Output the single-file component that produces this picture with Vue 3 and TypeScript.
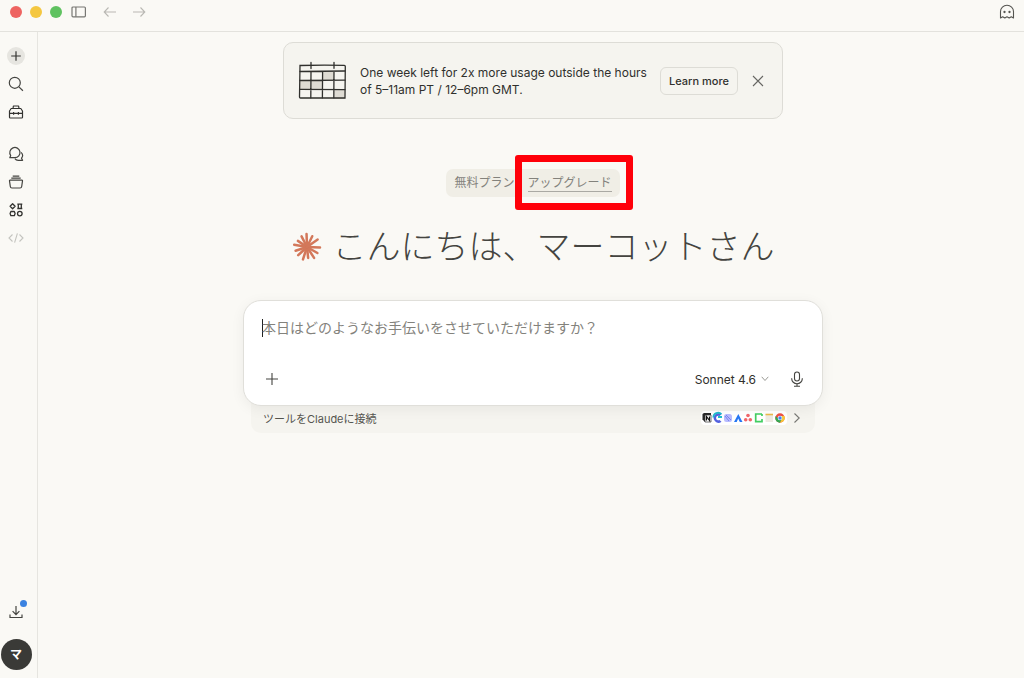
<script setup lang="ts">
import { ref } from 'vue'

const message = ref('')
const rays = [2, 30, 57, 84, 108, 137, 162, 190, 214, 243, 268, 296, 325]
const lengths = [14, 13, 14, 12, 14, 13, 13, 14, 12, 13, 14, 13, 14]
const shaded = [
  { x: 25, y: 11 },
  { x: 2, y: 20 },
  { x: 13, y: 20 },
  { x: 36, y: 29 },
]
</script>

<template>
  <div class="app">
    <header class="titlebar">
      <div class="lights">
        <i class="light red"></i>
        <i class="light yellow"></i>
        <i class="light green"></i>
      </div>
      <button class="icon-btn panel" aria-label="サイドバー">
        <svg width="16" height="12" viewBox="0 0 16 12" fill="none" stroke="#777773" stroke-width="1.2">
          <rect x="1" y="1" width="13.4" height="9.8" rx="1" />
          <path d="M4.9 1v9.8" />
        </svg>
      </button>
      <button class="icon-btn back" aria-label="戻る">
        <svg width="14" height="12" viewBox="0 0 14 12" fill="none" stroke="#b9b8b3" stroke-width="1.1">
          <path d="M13 6H1.500M5.500 1.500 1.200 6l4.300 4.500" />
        </svg>
      </button>
      <button class="icon-btn forward" aria-label="進む">
        <svg width="14" height="12" viewBox="0 0 14 12" fill="none" stroke="#b9b8b3" stroke-width="1.1">
          <path d="M1 6h11.500M8.500 1.500 12.800 6l-4.300 4.500" />
        </svg>
      </button>
      <button class="icon-btn ghost" aria-label="シークレットチャット">
        <svg width="16" height="16" viewBox="0 0 16 16" fill="none" stroke="#555551" stroke-width="1.1" stroke-linejoin="round">
          <path d="M1.500 14V7.500a6.500 6.300 0 0 1 13 0V14l-2.200-1.300L10.200 14 8 12.700 5.800 14l-2.100-1.300z" />
          <circle cx="5.500" cy="8" r=".6" fill="#555551" />
          <circle cx="10.500" cy="8" r=".6" fill="#555551" />
        </svg>
      </button>
    </header>

    <div class="body">
      <nav class="sidebar">
        <button class="side new" aria-label="新規チャット">
          <svg width="18" height="18" viewBox="0 0 18 18" fill="none" stroke="#333330" stroke-width="1.2"><path d="M9 4.200v9.600M4.200 9h9.600" /></svg>
        </button>
        <button class="side" aria-label="検索">
          <svg width="16" height="16" viewBox="0 0 16 16" fill="none" stroke="#444440" stroke-width="1.2"><circle cx="6.800" cy="6.800" r="5.500" /><path d="m10.900 10.900 4 3.900" /></svg>
        </button>
        <button class="side" aria-label="カスタマイズ">
          <svg width="16" height="16" viewBox="0 0 16 16" fill="none" stroke="#333330" stroke-width="1.2" stroke-linejoin="round">
            <path d="M5 4.500 5.400 2h5.200l.4 2.500M3.200 4.500h9.600L14.500 7v6.200q0 .8-.8.8H2.300q-.8 0-.8-.8V7zM1.500 9.300h13M5.600 8v2.700M10.400 8v2.700" />
          </svg>
        </button>
        <button class="side chats" aria-label="チャット">
          <svg width="16" height="16" viewBox="0 0 16 16" fill="none" stroke="#444440" stroke-width="1.2" stroke-linejoin="round">
            <path d="M1.800 11.700h5A5.100 5.100 0 1 0 2.700 9.500z" />
            <path d="M13.100 6.400a4.300 4.300 0 0 1 .4 5.800l1.100 2.100h-4.500a4 4 0 0 1-3.200-1.700" />
          </svg>
        </button>
        <button class="side" aria-label="プロジェクト">
          <svg width="16" height="16" viewBox="0 0 16 16" fill="none" stroke="#444440" stroke-width="1.2" stroke-linejoin="round">
            <path d="M4.700 2.100h6.600M3.300 4.100h9.400M2 6.200h12q.6 0 .5.700l-.8 5.600q-.2 1.500-1.600 1.500H3.900q-1.400 0-1.600-1.500L1.500 6.900q-.1-.7.500-.7z" />
          </svg>
        </button>
        <button class="side" aria-label="アーティファクト">
          <svg width="16" height="16" viewBox="0 0 16 16" fill="none" stroke="#333330" stroke-width="1.300" stroke-linejoin="round">
            <path d="M4.600 1.800 7.100 4.300 4.600 6.800 2.100 4.300zM9.300 2.200h5M9.300 6.500h5M10.300 2.200v4.300M13.300 2.200v4.300" />
            <path d="M2.900 9.500h3.400l.8 2-.8 2.200H2.900l-.8-2.200z" /><circle cx="11.800" cy="11.600" r="2.300" />
          </svg>
        </button>
        <button class="side" aria-label="コード">
          <svg width="16" height="16" viewBox="0 0 16 16" fill="none" stroke="#c4c4bf" stroke-width="1.100"><path d="M4.500 4.500 1 8l3.500 3.500M11.500 4.500 15 8l-3.500 3.500M9.400 3.300 6.600 12.700" /></svg>
        </button>
        <button class="side download" aria-label="ダウンロード">
          <svg width="16" height="16" viewBox="0 0 16 16" fill="none" stroke="#444440" stroke-width="1.2"><path d="M8 2v8.500M4.600 7.200 8 10.600l3.400-3.400M2 10.500v3h12v-3" /></svg>
          <i class="dot"></i>
        </button>
        <button class="avatar" aria-label="アカウント">マ</button>
      </nav>

      <main class="main">
        <section class="banner">
          <svg class="calendar" width="50" height="40" viewBox="0 0 50 40" fill="none" stroke="#30302d" stroke-width="1.300" stroke-linecap="round">
            <rect v-for="(s, i) in shaded" :key="i" :x="s.x" :y="s.y" width="11" height="9" fill="#dedbd3" stroke="none" />
            <path d="M2 4.500Q24 4 46.300 4.400q1 0 1 1L47 37H2.500q-1 0-1-1z" />
            <path d="M2 10.500 47 10M2 19.500l45-.3M2 28.400l45 .2M13 10.500l-.2 26.300M24.600 10.500l-.2 26.300M36 10.500l-.2 26.300M13 1.500v6M36 1.300v6" />
          </svg>
          <p class="notice">One week left for 2x more usage outside the hours of 5–11am PT / 12–6pm GMT.</p>
          <button class="learn">Learn more</button>
          <button class="icon-btn" aria-label="閉じる">
            <svg width="12" height="12" viewBox="0 0 12 12" fill="none" stroke="#666662" stroke-width="1.100"><path d="m1 1 10 10M11 1 1 11" /></svg>
          </button>
        </section>

        <div class="plan">
          <span>無料プラン</span>
          <span class="upgrade"><a href="#">アップグレード</a><i class="marker"></i></span>
        </div>

        <h1 class="greeting">
          <svg width="30" height="30" viewBox="-15 -15 30 30" stroke="#d3785a" stroke-width="2.500" stroke-linecap="round">
            <line v-for="(a, i) in rays" :key="a" x1="0" y1="0" :x2="lengths[i] - 1" y2="0" :transform="`rotate(${a})`" />
          </svg>
          <span>こんにちは、マーコットさん</span>
        </h1>

        <div class="composer-wrap">
          <form class="composer" @submit.prevent>
            <div class="field">
              <i class="caret"></i>
              <input v-model="message" type="text" aria-label="メッセージ" placeholder="本日はどのようなお手伝いをさせていただけますか？" />
            </div>
            <div class="actions">
              <button type="button" class="icon-btn" aria-label="追加">
                <svg width="14" height="14" viewBox="0 0 14 14" fill="none" stroke="#444440" stroke-width="1.100"><path d="M7 1v12M1 7h12" /></svg>
              </button>
              <button type="button" class="model">
                Sonnet 4.6
                <svg width="8" height="6" viewBox="0 0 8 6" fill="none" stroke="#999994" stroke-width="1"><path d="m.7.8 3.300 3.700L7.300.8" /></svg>
              </button>
              <button type="button" class="icon-btn" aria-label="音声入力">
                <svg width="14" height="16" viewBox="0 0 14 16" fill="none" stroke="#444440" stroke-width="1.100"><rect x="4.500" y="1" width="5" height="9" rx="2.500" /><path d="M1.700 7.200v.5a5.300 5 0 0 0 10.600 0v-.5M7 12.700v2.500M4 15.200h6" /></svg>
              </button>
            </div>
          </form>
          <button class="tools">
            <span>ツールをClaudeに接続</span>
            <span class="logos">
              <svg width="86" height="14" viewBox="0 0 86 14">
                <g fill="none">
                  <path d="M1.500 3 3 2h7v9H4L1.500 8.500z" fill="#292929" />
                  <path d="M4 4h6v7H4z" fill="#fff" stroke="#333" stroke-width=".7" /><path d="M5.500 9.500v-4l3 4v-4" stroke="#111" stroke-width="1.200" />
                  <path d="M20.500 3.200A4.800 4.800 0 1 0 20.500 10.800L18.500 9a2.300 2.300 0 1 1 0-4z" fill="#5361df" />
                  <path d="M20.500 3.200A4.800 4.800 0 0 0 12.300 6.500" stroke="#20bbce" stroke-width="1.800" /><path d="M17 5h4v2h-4z" fill="#19bed0" />
                  <rect x="23" y="3" width="8" height="8" rx="2.500" fill="#b8bcff" /><path d="m24 5 4 5M25 4l5 5" stroke="#7b83ed" stroke-width="1" />
                  <path d="m37.300 3 4.200 8h-2.700l-1.600-3.400-1.500 3.400H33z" fill="#2677f4" />
                  <g fill="#f1666b"><circle cx="47" cy="4.500" r="1.800" /><circle cx="44.700" cy="8.800" r="1.800" /><circle cx="49.300" cy="8.800" r="1.800" /></g>
                  <path d="M61 3h-6.300v7.700H61V8M61 3v2" stroke="#42ce62" stroke-width="1.700" />
                  <path d="M64.500 3H72v8h-7.500z" fill="#eeeae2" /><path d="M64.500 3.500H72" stroke="#ebbb4a" stroke-width="1.600" />
                  <circle cx="79" cy="7" r="4.700" fill="#ee5145" /><path d="M74.800 4.900A4.700 4.700 0 0 0 79 11.700L80.800 8 76.500 7z" fill="#35a853" /><path d="M79 11.700A4.700 4.700 0 0 0 83.300 5H79l2 3z" fill="#f8c936" /><circle cx="79" cy="7" r="2.300" fill="#fff" /><circle cx="79" cy="7" r="1.700" fill="#4285f4" />
                </g>
              </svg>
            </span>
            <svg width="8" height="12" viewBox="0 0 8 12" fill="none" stroke="#777773" stroke-width="1.100"><path d="m1.500 1.500 4.700 4.500-4.700 4.500" /></svg>
          </button>
        </div>
      </main>
    </div>
  </div>
</template>

<style>
body {
  background: #faf9f5;
}
</style>

<style scoped>
* {
  box-sizing: border-box;
}
.app {
  display: flex;
  flex-direction: column;
  min-height: 100vh;
  background: #faf9f5;
  color: #30302d;
  font-family: Inter, "Noto Sans CJK JP", sans-serif;
}
button {
  border: 0;
  padding: 0;
  background: none;
  color: inherit;
  font: inherit;
}
svg {
  display: block;
  flex: none;
}
.titlebar {
  display: flex;
  align-items: center;
  height: 32px;
  padding: 0 9px 8px 10px;
  border-bottom: 1px solid #e3e2dd;
}
.lights {
  display: flex;
  gap: 8px;
}
.light {
  width: 12px;
  height: 12px;
  border-radius: 50%;
}
.red { background: #ee6461; }
.yellow { background: #f4c740; }
.green { background: #5fc260; }
.panel { margin-left: 9px; }
.back { margin-left: 16px; }
.forward { margin-left: 15px; }
.ghost { margin-left: auto; }
.body {
  display: flex;
  flex: 1;
}
.sidebar {
  display: flex;
  flex-direction: column;
  align-items: center;
  gap: 10px;
  width: 38px;
  padding: 15px 5px 8px 0;
  border-right: 1px solid #e6e5e0;
}
.side {
  position: relative;
  display: grid;
  place-items: center;
  width: 18px;
  height: 18px;
}
.new {
  border-radius: 50%;
  background: #e6e5e0;
}
.chats { margin-top: 14px; }
.download { margin-top: auto; }
.dot {
  position: absolute;
  top: -3px;
  right: -2px;
  width: 7px;
  height: 7px;
  border-radius: 50%;
  background: #3b82e0;
}
.avatar {
  width: 31px;
  height: 31px;
  margin-top: 8px;
  border-radius: 50%;
  background: #3a3a37;
  color: #fff;
  font-size: 12px;
  font-weight: 600;
  line-height: 30px;
}
.main {
  display: flex;
  flex: 1;
  flex-direction: column;
  align-items: center;
  padding: 10px 0 0 4px;
}
.banner {
  display: flex;
  align-items: center;
  width: 100%;
  max-width: 500px;
  height: 77px;
  padding: 0 18px 0 14px;
  border: 1px solid #dddcd6;
  border-radius: 10px;
  background: #f5f4ef;
}
.notice {
  flex: 1;
  margin: 0 6px 0 12px;
  font-size: 12px;
  line-height: 17px;
}
.learn {
  width: 78px;
  height: 28px;
  margin-right: 14px;
  border: 1px solid #dddcd6;
  border-radius: 6px;
  font-size: 11px;
  font-weight: 500;
}
.plan {
  display: flex;
  gap: 13px;
  margin-top: 50px;
  padding: 0 8px;
  border-radius: 7px;
  background: #f0eee6;
  color: #83827c;
  font-size: 12px;
  line-height: 28px;
}
.upgrade {
  position: relative;
}
.upgrade a {
  padding-bottom: 1px;
  border-bottom: 1px solid #aaa9a3;
  color: inherit;
  text-decoration: none;
}
.marker {
  position: absolute;
  inset: -14px -21px -13px -13px;
  border: 7px solid #ff0009;
  border-radius: 3px;
}
.greeting {
  display: flex;
  align-items: center;
  gap: 11px;
  margin: 26px 0 0;
  color: #444440;
  font-size: 34px;
  font-weight: 300;
  line-height: 48px;
}
.composer-wrap {
  width: 100%;
  max-width: 580px;
  margin-top: 29px;
}
.composer {
  position: relative;
  display: flex;
  flex-direction: column;
  justify-content: space-between;
  height: 106px;
  padding: 17px 18px 18px;
  border: 1px solid #e0dfda;
  border-radius: 18px;
  background: #fff;
  box-shadow: 0 3px 14px rgb(0 0 0 / 6%);
}
.field {
  display: flex;
  align-items: center;
}
.caret {
  width: 1px;
  height: 18px;
  margin-right: -1px;
  background: #222220;
}
input {
  flex: 1;
  min-width: 0;
  padding: 0;
  border: 0;
  outline: 0;
  background: none;
  font: inherit;
  font-size: 14px;
  line-height: 20px;
}
input::placeholder {
  color: #83827c;
  opacity: 1;
}
.actions {
  display: flex;
  align-items: center;
  padding-left: 3px;
}
.model {
  display: flex;
  align-items: center;
  gap: 5px;
  margin: 0 21px 0 auto;
  font-size: 12px;
}
.tools {
  display: flex;
  align-items: center;
  width: calc(100% - 16px);
  height: 38px;
  margin: -11px 8px 0;
  padding: 7px 14px 0 12px;
  border-radius: 0 0 10px 10px;
  background: #f5f4ef;
  color: #55554f;
  font-size: 11px;
}
.logos {
  margin: 0 6px 0 auto;
  border-radius: 4px;
  background: #fff;
}
</style>
